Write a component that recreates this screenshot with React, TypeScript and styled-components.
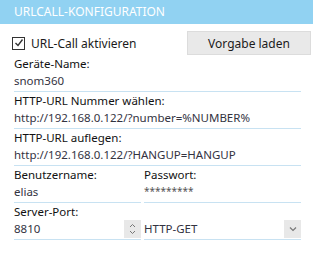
import React from 'react'
import styled, { createGlobalStyle } from 'styled-components'

const GlobalStyle = createGlobalStyle`
  body {
    margin: 0;
    background: #ffffff;
    font-family: 'Noto Sans', 'Open Sans', sans-serif;
    font-size: 11.5px;
    color: #1b1b1b;
  }
`

const Panel = styled.div`
  width: 313px;
`

const Header = styled.div`
  height: 24px;
  line-height: 24px;
  background: #91d2f2;
  color: #ffffff;
  font-size: 12px;
  padding-left: 14px;
`

const Body = styled.div`
  padding: 0 12px 0 14px;
`

const TopRow = styled.div`
  display: flex;
  justify-content: space-between;
  align-items: center;
  margin: 7px -10px 0 -2px;
  height: 24px;
`

const CheckLabel = styled.label`
  display: flex;
  align-items: center;
  gap: 6px;
  font-size: 12px;
`

const Box = styled.span`
  width: 11px;
  height: 11px;
  border: 1px solid #333;
  display: flex;
  align-items: center;
  justify-content: center;
`

const Button = styled.button`
  width: 124px;
  height: 24px;
  background: #e9e9e9;
  border: 1px solid #dcdcdc;
  font-family: inherit;
  font-size: 12px;
  color: #1b1b1b;
  padding: 0;
`

const Field = styled.div`
  margin-top: 1px;
  border-bottom: 1px solid #c8e2f2;
  padding-bottom: 2px;
`

const Label = styled.div`
  line-height: 16px;
  color: #111;
`

const Value = styled.div<{ $masked?: boolean }>`
  height: 17px;
  line-height: 17px;
  display: flex;
  justify-content: space-between;
  font-size: ${(p) => (p.$masked ? '10px' : 'inherit')};
  color: ${(p) => (p.$masked ? '#555' : '#33333f')};
  align-items: ${(p) => (p.$masked ? 'flex-start' : 'center')};
`

const Columns = styled.div`
  display: grid;
  grid-template-columns: 127px 157px;
  gap: 3px;
`

const Stepper = styled.span`
  width: 17px;
  height: 18px;
  background: #e8e8e8;
  display: flex;
  align-items: center;
  justify-content: center;
`

const Check = () => (
  <svg width="10" height="10" viewBox="0 0 10 10">
    <path d="M1.5 5 L4 7.5 L8.5 1.5" fill="none" stroke="#333" strokeWidth="1.4" />
  </svg>
)

const Spin = () => (
  <svg width="7" height="12" viewBox="0 0 7 12">
    <path d="M1 4 L3.5 1.5 L6 4 M1 8 L3.5 10.5 L6 8" fill="none" stroke="#777" strokeWidth="1" />
  </svg>
)

const Chevron = () => (
  <svg width="8" height="6" viewBox="0 0 8 6">
    <path d="M1 1.5 L4 4.5 L7 1.5" fill="none" stroke="#777" strokeWidth="1.2" />
  </svg>
)

export default function App() {
  return (
    <Panel>
      <GlobalStyle />
      <Header>URLCALL-KONFIGURATION</Header>
      <Body>
        <TopRow>
          <CheckLabel>
            <Box>
              <Check />
            </Box>
            URL-Call aktivieren
          </CheckLabel>
          <Button>Vorgabe laden</Button>
        </TopRow>
        <Field>
          <Label>Geräte-Name:</Label>
          <Value>snom360</Value>
        </Field>
        <Field>
          <Label>HTTP-URL Nummer wählen:</Label>
          <Value>http://192.168.0.122/?number=%NUMBER%</Value>
        </Field>
        <Field>
          <Label>HTTP-URL auflegen:</Label>
          <Value>http://192.168.0.122/?HANGUP=HANGUP</Value>
        </Field>
        <Columns>
          <Field>
            <Label>Benutzername:</Label>
            <Value>elias</Value>
          </Field>
          <Field>
            <Label>Passwort:</Label>
            <Value $masked>*********</Value>
          </Field>
        </Columns>
        <Columns>
          <Field>
            <Label>Server-Port:</Label>
            <Value>
              8810
              <Stepper>
                <Spin />
              </Stepper>
            </Value>
          </Field>
          <Field>
            <Label>&nbsp;</Label>
            <Value>
              HTTP-GET
              <Stepper>
                <Chevron />
              </Stepper>
            </Value>
          </Field>
        </Columns>
      </Body>
    </Panel>
  )
}
